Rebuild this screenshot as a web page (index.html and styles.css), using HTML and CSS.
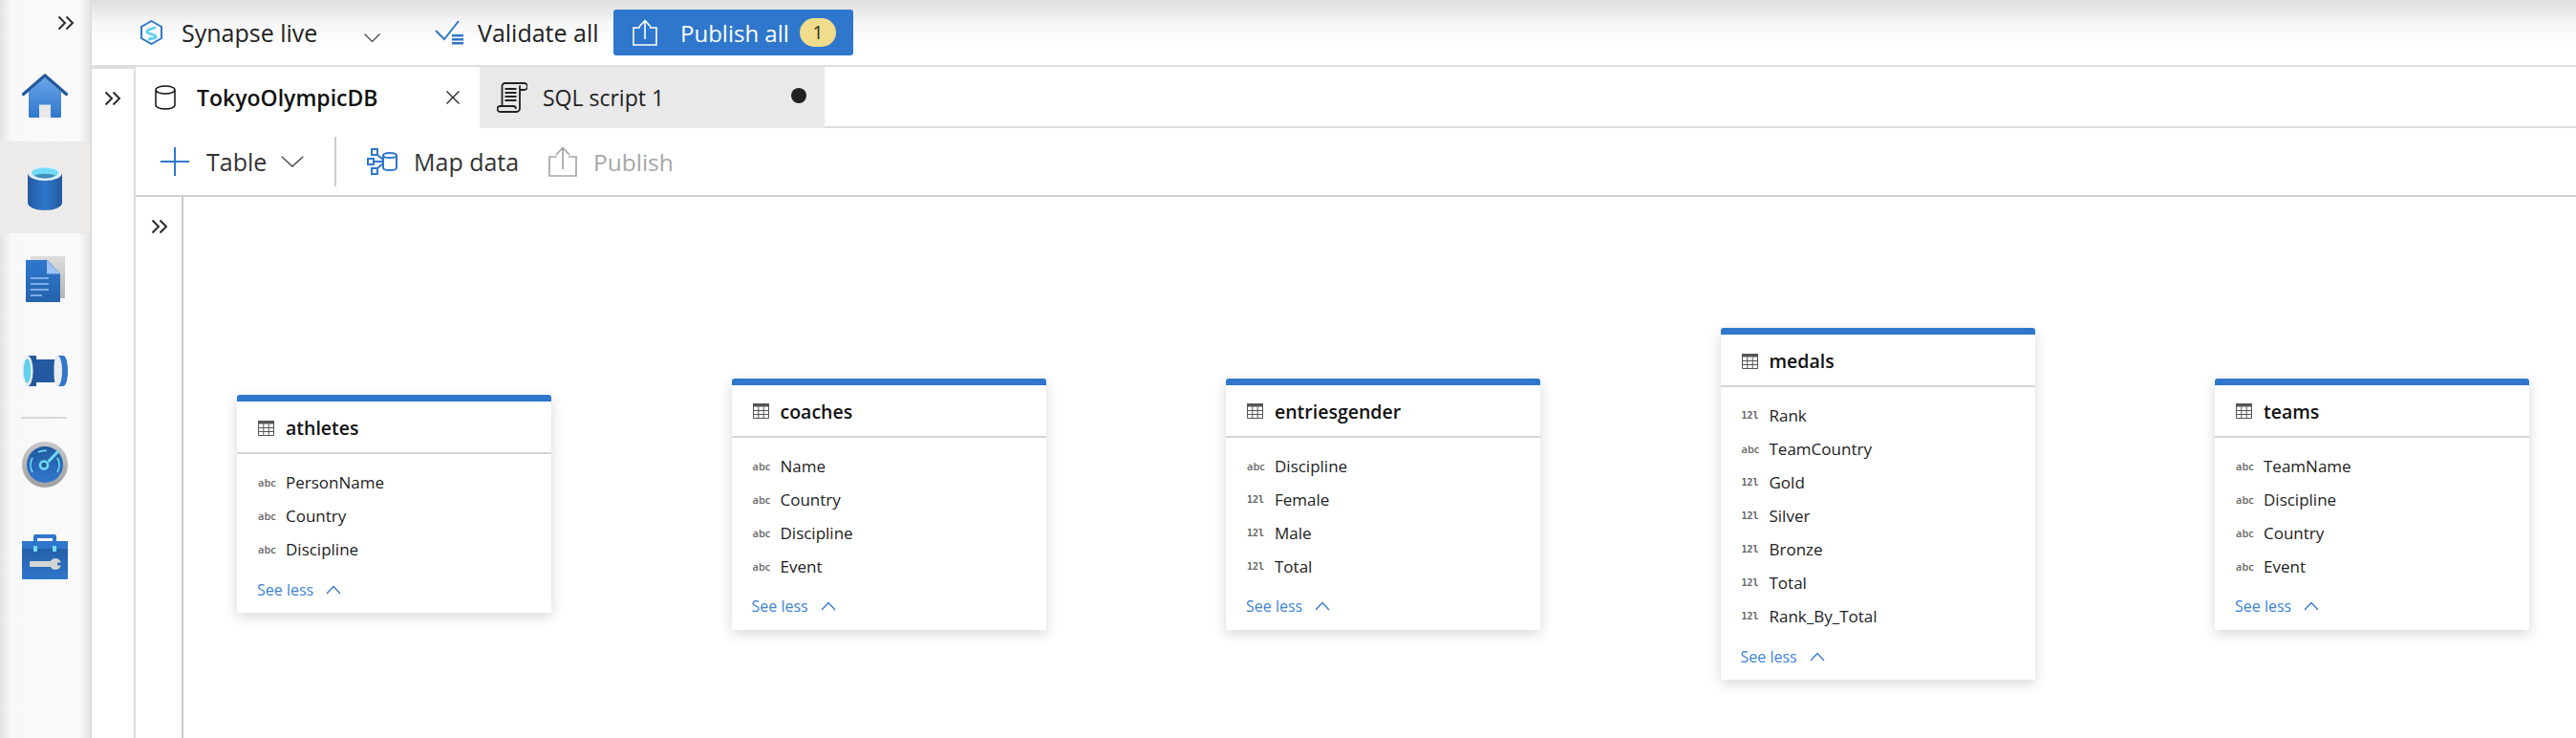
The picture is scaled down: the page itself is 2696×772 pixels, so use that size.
FILE: index.html
```html
<!DOCTYPE html>
<html lang="en">
<head>
    <meta charset="UTF-8">
    <title>Synapse Studio</title>
    <link rel="stylesheet" href="styles.css">
</head>

<body>

<!-- Shared icons -->
<svg class="defs" aria-hidden="true">
    <defs>
        <linearGradient id="g-down" x1="0" y1="0" x2="0" y2="1">
            <stop offset="0" stop-color="#6aa5ea"/>
            <stop offset="1" stop-color="#2f77cc"/>
        </linearGradient>
        <linearGradient id="g-cyl" x1="0" y1="0" x2="1" y2="0">
            <stop offset="0" stop-color="#22599f"/>
            <stop offset=".5" stop-color="#2f77cc"/>
            <stop offset="1" stop-color="#22599f"/>
        </linearGradient>
        <linearGradient id="g-doc" x1="0" y1="0" x2="0" y2="1">
            <stop offset="0" stop-color="#2f77cc"/>
            <stop offset="1" stop-color="#2562ad"/>
        </linearGradient>
        <linearGradient id="g-back" x1="0" y1="0" x2="0" y2="1">
            <stop offset="0" stop-color="#dcdcdc"/>
            <stop offset="1" stop-color="#b4b4b4"/>
        </linearGradient>
        <linearGradient id="g-ring" x1="0" y1="0" x2="0" y2="1">
            <stop offset="0" stop-color="#c8c8c8"/>
            <stop offset="1" stop-color="#a0a0a0"/>
        </linearGradient>
        <linearGradient id="g-box" x1="0" y1="0" x2="0" y2="1">
            <stop offset="0" stop-color="#22599f"/>
            <stop offset="1" stop-color="#2f77cc"/>
        </linearGradient>
        <symbol id="i-table" viewBox="0 0 17 16">
            <path d="M.5.5h16v15H.5z" fill="none" stroke="#555" stroke-width="1"/>
            <path d="M0 0h17v3.500H0z" fill="#555"/>
            <path d="M.5 7.500h16M.5 11.500h16M5.800 3.500v12M11.200 3.500v12" fill="none" stroke="#555" stroke-width="1"/>
        </symbol>
        <symbol id="i-up" viewBox="0 0 16 10">
            <path d="M1 9l7-7.500L15 9" fill="none" stroke="#2f77cc" stroke-width="1.200"/>
        </symbol>
        <symbol id="i-double" viewBox="0 0 18 16">
            <path d="M1.500 1.500L8 8l-6.500 6.500M9.500 1.500L16 8l-6.500 6.500" fill="none" stroke="#2b2b2b" stroke-width="2"/>
        </symbol>
    </defs>
</svg>

<!-- Left rail -->
<aside class="rail">
    <svg class="rail-toggle"><use href="#i-double"></use></svg>

    <div class="rail-item">
        <svg width="48" height="46" viewBox="0 0 48 46">
            <path d="M7 19L24 4l17 15v25.500a1.500 1.500 0 0 1-1.500 1.500H8.500A1.500 1.500 0 0 1 7 44.500z" fill="url(#g-down)"/>
            <path d="M1.500 21.500L24 2l22.500 19.500" fill="none" stroke="#22599f" stroke-width="3.400" stroke-linecap="round" stroke-linejoin="round"/>
            <rect x="18" y="32.500" width="12" height="13.500" fill="#e8e8e8"/>
        </svg>
    </div>

    <div class="rail-item active">
        <svg width="36" height="47" viewBox="0 0 36 47">
            <path d="M0 8v31c0 4.500 8 8 18 8s18-3.500 18-8V8z" fill="url(#g-cyl)"/>
            <ellipse cx="18" cy="8" rx="18" ry="8" fill="#e6edf4"/>
            <ellipse cx="18" cy="8" rx="14" ry="5.500" fill="#72dcf6"/>
            <path d="M7 10.500c2 1.800 6 3 11 3s9-1.200 11-3c-2.500-1-6.500-1.700-11-1.700s-8.500.7-11 1.700z" fill="#3f8fb8"/>
        </svg>
    </div>

    <div class="rail-item">
        <svg width="41" height="48" viewBox="0 0 41 48">
            <rect x="5" y="0" width="36" height="44" rx="1" fill="url(#g-back)"/>
            <path d="M1 4h21.500L36 18.500V47a1 1 0 0 1-1 1H1a1 1 0 0 1-1-1V5a1 1 0 0 1 1-1z" fill="url(#g-doc)"/>
            <path d="M22 4l14 14.500H22z" fill="#9cc3f3"/>
            <path d="M5 23h19M5 29h19M5 35h19M5 41h12" stroke="#9cc3f3" stroke-width="1.600"/>
        </svg>
    </div>

    <div class="rail-item">
        <svg width="48" height="32" viewBox="0 0 48 32">
            <rect x="9" y="4" width="28" height="24" fill="#22599f"/>
            <path d="M6 0h9v32H6z" fill="#22599f"/>
            <path d="M37 0h6c3 0 5 7 5 16s-2 16-5 16h-6z" fill="#2f77cc"/>
            <path d="M37 0c3 0 5 7 5 16s-2 16-5 16-3.500-7-3.500-16 .5-16 3.500-16z" fill="#e8edf2"/>
            <ellipse cx="5.800" cy="16" rx="5.800" ry="16" fill="#e8edf2"/>
            <ellipse cx="5.500" cy="16" rx="3.800" ry="12.500" fill="#62cfee"/>
        </svg>
    </div>

    <div class="rail-divider"></div>

    <div class="rail-item">
        <svg width="48" height="48" viewBox="0 0 48 48">
            <circle cx="24" cy="24" r="24" fill="url(#g-ring)"/>
            <circle cx="24" cy="24" r="19" fill="url(#g-box)"/>
            <path d="M11 32a15 15 0 0 1 0-15M17 11a15 15 0 0 1 9-1.500M37 17a15 15 0 0 1 0 15" fill="none" stroke="#6fdcf5" stroke-width="1.600"/>
            <path d="M38 10L27.500 21" stroke="#6fdcf5" stroke-width="3"/>
            <circle cx="23" cy="24.500" r="4" fill="#22599f" stroke="#6fdcf5" stroke-width="2.600"/>
        </svg>
    </div>

    <div class="rail-item">
        <svg width="48" height="48" viewBox="0 0 48 48">
            <path d="M12 10V3a2 2 0 0 1 2-2h20a2 2 0 0 1 2 2v7h-4V5H16v5z" fill="#2f77cc"/>
            <rect x="0" y="8" width="48" height="40" rx="1" fill="url(#g-box)"/>
            <rect x="0" y="8" width="48" height="8" fill="#2f77cc"/>
            <path d="M12 13h4v6h-4zM32 13h4v6h-4z" fill="#6fdcf5"/>
            <rect x="8" y="29" width="24" height="6" rx="1" fill="#d4d4d4"/>
            <circle cx="35" cy="32" r="6" fill="#d4d4d4"/>
            <rect x="37" y="30.500" width="5" height="3" fill="#2a69b6"/>
        </svg>
    </div>
</aside>

<div class="main">

    <!-- Top command bar -->
    <header class="topbar">
        <svg class="hub-icon" width="23" height="26" viewBox="0 0 23 26">
            <path d="M11.500 1L22 7v12l-10.500 6L1 19V7z" fill="none" stroke="#2f77cc" stroke-width="2"/>
            <path d="M16 7.500L8 10.500c-1.500.8-1.500 2.200 0 3l7 2.500c1.500.8 1.500 2 0 2.800L8 20" fill="none" stroke="#5fd0f0" stroke-width="2.800"/>
        </svg>
        <span class="hub-name">Synapse live</span>
        <svg class="hub-caret" width="17" height="9" viewBox="0 0 17 9">
            <path d="M.5.5l8 8 8-8" fill="none" stroke="#444" stroke-width="1.200"/>
        </svg>
        <svg class="validate-icon" width="30" height="26" viewBox="0 0 30 26">
            <path d="M1 11l9 9L25 1" fill="none" stroke="#2f77cc" stroke-width="2"/>
            <path d="M18 15h12v2.500H18zM18 19h12v2.500H18zM18 23h12v2.500H18z" fill="#2f77cc"/>
        </svg>
        <span class="validate-label">Validate all</span>
        <button class="publish-btn">
            <svg width="26" height="28" viewBox="0 0 26 28">
                <path d="M8 9H1v18h24V9h-7M13 21V2M7 8l6-6.500L19 8" fill="none" stroke="#fff" stroke-width="1.600"/>
            </svg>
            <span class="publish-label">Publish all</span>
            <span class="badge">1</span>
        </button>
    </header>

    <div class="workspace">

        <!-- Collapsed explorer -->
        <div class="explorer">
            <svg class="pane-toggle"><use href="#i-double"></use></svg>
        </div>

        <div class="content">

            <!-- Tabs -->
            <div class="tabs">
                <div class="tab tab-active">
                    <svg width="22" height="26" viewBox="0 0 22 26">
                        <path d="M1 5v16c0 2.200 4.500 4 10 4s10-1.800 10-4V5M1 5c0-2.200 4.500-4 10-4s10 1.800 10 4-4.500 4-10 4S1 7.200 1 5z" fill="none" stroke="#111" stroke-width="1.500"/>
                    </svg>
                    <span class="tab-title">TokyoOlympicDB</span>
                    <svg class="tab-close" width="16" height="14" viewBox="0 0 16 14">
                        <path d="M1.500.5l13 13M14.500.5l-13 13" fill="none" stroke="#222" stroke-width="1.300"/>
                    </svg>
                </div>
                <div class="tab tab-script">
                    <svg width="32" height="32" viewBox="0 0 32 32">
                        <path d="M5.500 25V4a3 3 0 0 1 3-3h20a3.500 3.500 0 0 1 0 7H24M24 3.500V27.500A3.500 3.500 0 0 1 20.500 31H3.500a3 3 0 0 1 0-6H17a3 3 0 0 1 3 3M8.500 1h15" fill="none" stroke="#222" stroke-width="1.800"/>
                        <path d="M8.500 7h12M8.500 11h12M8.500 15h12M8.500 19h12" stroke="#222" stroke-width="1.800"/>
                    </svg>
                    <span class="tab-script-title">SQL script 1</span>
                    <span class="dirty-dot"></span>
                </div>
                <div class="tabs-rest"></div>
            </div>

            <!-- Toolbar -->
            <div class="toolbar">
                <svg class="plus-icon" width="30" height="30" viewBox="0 0 30 30">
                    <path d="M15 0v30M0 15h30" stroke="#2f77cc" stroke-width="2"/>
                </svg>
                <span class="table-label">Table</span>
                <svg class="table-caret" width="24" height="12" viewBox="0 0 24 12">
                    <path d="M.7.7L12 11 23.300.7" fill="none" stroke="#444" stroke-width="1.300"/>
                </svg>
                <div class="toolbar-sep"></div>
                <svg class="map-icon" width="32" height="28" viewBox="0 0 32 28">
                    <path d="M5 1h6v6H5zM1 11h6v6H1zM5 21h6v6H5zM11 7l6 5M7 14h10M11 21l6-5" fill="none" stroke="#2f77cc" stroke-width="2"/>
                    <path d="M17 7.500v13c0 1.500 3 2.500 7 2.500s7-1 7-2.500v-13M17 7.500C17 6 20 5 24 5s7 1 7 2.500-3 2.500-7 2.500-7-1-7-2.500z" fill="none" stroke="#2f77cc" stroke-width="2"/>
                </svg>
                <span class="map-label">Map data</span>
                <svg class="publish-icon" width="30" height="32" viewBox="0 0 30 32">
                    <path d="M9 11H1v20h28V11h-8M15 24V2M8 9l7-7.500L22 9" fill="none" stroke="#a6a6a6" stroke-width="1.700"/>
                </svg>
                <span class="publish-muted">Publish</span>
            </div>

            <div class="designer">
                <div class="designer-side">
                    <svg class="pane-toggle"><use href="#i-double"></use></svg>
                </div>

                <!-- Table cards -->
                <div class="canvas">
                    <section class="card">
                        <h3 class="card-head"><svg class="table-icon"><use href="#i-table"></use></svg>athletes</h3>
                        <ul class="fields">
                            <li><span class="type">abc</span>PersonName</li>
                            <li><span class="type">abc</span>Country</li>
                            <li><span class="type">abc</span>Discipline</li>
                        </ul>
                        <div class="see-less">See less <svg class="up-icon"><use href="#i-up"></use></svg></div>
                    </section>

                    <section class="card">
                        <h3 class="card-head"><svg class="table-icon"><use href="#i-table"></use></svg>coaches</h3>
                        <ul class="fields">
                            <li><span class="type">abc</span>Name</li>
                            <li><span class="type">abc</span>Country</li>
                            <li><span class="type">abc</span>Discipline</li>
                            <li><span class="type">abc</span>Event</li>
                        </ul>
                        <div class="see-less">See less <svg class="up-icon"><use href="#i-up"></use></svg></div>
                    </section>

                    <section class="card">
                        <h3 class="card-head"><svg class="table-icon"><use href="#i-table"></use></svg>entriesgender</h3>
                        <ul class="fields">
                            <li><span class="type">abc</span>Discipline</li>
                            <li><span class="type num">12l</span>Female</li>
                            <li><span class="type num">12l</span>Male</li>
                            <li><span class="type num">12l</span>Total</li>
                        </ul>
                        <div class="see-less">See less <svg class="up-icon"><use href="#i-up"></use></svg></div>
                    </section>

                    <section class="card">
                        <h3 class="card-head"><svg class="table-icon"><use href="#i-table"></use></svg>medals</h3>
                        <ul class="fields">
                            <li><span class="type num">12l</span>Rank</li>
                            <li><span class="type">abc</span>TeamCountry</li>
                            <li><span class="type num">12l</span>Gold</li>
                            <li><span class="type num">12l</span>Silver</li>
                            <li><span class="type num">12l</span>Bronze</li>
                            <li><span class="type num">12l</span>Total</li>
                            <li><span class="type num">12l</span>Rank_By_Total</li>
                        </ul>
                        <div class="see-less">See less <svg class="up-icon"><use href="#i-up"></use></svg></div>
                    </section>

                    <section class="card">
                        <h3 class="card-head"><svg class="table-icon"><use href="#i-table"></use></svg>teams</h3>
                        <ul class="fields">
                            <li><span class="type">abc</span>TeamName</li>
                            <li><span class="type">abc</span>Discipline</li>
                            <li><span class="type">abc</span>Country</li>
                            <li><span class="type">abc</span>Event</li>
                        </ul>
                        <div class="see-less">See less <svg class="up-icon"><use href="#i-up"></use></svg></div>
                    </section>
                </div>
            </div>
        </div>
    </div>
</div>

</body>
</html>
```

FILE: styles.css
```css
html, body {
    height: 100%;
    margin: 0;
    padding: 0;
}

body {
    display: flex;
    height: 772px;
    overflow: hidden;
    background: #fff;
    color: #222;
    font-family: "Open Sans", "Noto Sans", sans-serif;
}

.defs {
    width: 0;
    height: 0;
    position: absolute;
}

/* Left rail */
.rail {
    width: 94px;
    flex-shrink: 0;
    border-right: 2px solid #ddd;
    display: flex;
    flex-direction: column;
    align-items: stretch;
    background: linear-gradient(90deg, #e4e4e4 0, #f8f8f8 12px, #fafafa 82px, #e6e6e6 94px);
}

.rail-toggle {
    width: 18px;
    height: 16px;
    margin: 16px 0 20px 60px;
    flex-shrink: 0;
}

.rail-item {
    height: 96px;
    display: flex;
    align-items: center;
    justify-content: center;
}

.rail-item.active {
    background: #edebe9;
}

.rail-divider {
    height: 2px;
    margin: 0 24px 0 22px;
    background: #d9d9d9;
}

/* Top command bar */
.main {
    flex: 1;
    min-width: 0;
    display: flex;
    flex-direction: column;
}

.topbar {
    height: 68px;
    border-bottom: 2px solid #ddd;
    display: flex;
    align-items: center;
    background: linear-gradient(180deg, #dedede 0, #f6f6f6 24px, #fff 48px);
    font-size: 25px;
}

.hub-icon {
    margin-left: 51px;
}

.hub-name {
    margin-left: 20px;
    width: 141px;
    white-space: nowrap;
}

.hub-caret {
    margin-left: 50px;
    margin-top: 10px;
}

.validate-icon {
    margin-left: 57px;
}

.validate-label {
    margin-left: 15px;
    width: 125px;
    white-space: nowrap;
}

.publish-btn {
    margin-left: 17px;
    width: 251px;
    height: 48px;
    padding: 0 0 0 20px;
    border: none;
    border-radius: 3px;
    background: #2f77cc;
    color: #fff;
    display: flex;
    align-items: center;
    font-family: inherit;
    font-size: 24px;
}

.publish-label {
    margin-left: 24px;
    width: 125px;
    text-align: left;
    white-space: nowrap;
}

.badge {
    width: 38px;
    height: 30px;
    border-radius: 15px;
    background: #f0dc8c;
    color: #333;
    font-size: 20px;
    line-height: 30px;
    text-align: center;
}

/* Workspace */
.workspace {
    flex: 1;
    display: flex;
    min-height: 0;
}

.explorer {
    width: 44px;
    flex-shrink: 0;
    border-top: 2px solid #ddd;
    border-right: 2px solid #ddd;
}

.pane-toggle {
    width: 18px;
    height: 16px;
    display: block;
}

.explorer .pane-toggle {
    margin: 23px 0 0 13px;
}

.content {
    flex: 1;
    min-width: 0;
    display: flex;
    flex-direction: column;
}

/* Tabs */
.tabs {
    height: 64px;
    display: flex;
}

.tab {
    display: flex;
    align-items: center;
    box-sizing: border-box;
}

.tab-active {
    width: 360px;
    padding-left: 20px;
}

.tab-title {
    margin-left: 22px;
    width: 260px;
    font-size: 23px;
    font-weight: 600;
    color: #111;
    white-space: nowrap;
}

.tab-script {
    width: 361px;
    padding-left: 18px;
    background: #e9e9e9;
}

.tab-script-title {
    margin-left: 16px;
    width: 260px;
    font-size: 23px;
    white-space: nowrap;
}

.dirty-dot {
    width: 16px;
    height: 16px;
    border-radius: 50%;
    background: #222;
    margin-bottom: 4px;
}

.tabs-rest {
    flex: 1;
    border-bottom: 2px solid #ddd;
}

/* Toolbar */
.toolbar {
    height: 70px;
    border-bottom: 2px solid #cfcfcf;
    display: flex;
    align-items: center;
    font-size: 25px;
    color: #333;
}

.plus-icon {
    margin-left: 26px;
}

.table-label {
    margin-left: 18px;
    width: 62px;
}

.table-caret {
    margin-left: 16px;
}

.toolbar-sep {
    width: 2px;
    height: 52px;
    margin-left: 32px;
    background: #ccc;
}

.map-icon {
    margin-left: 32px;
}

.map-label {
    margin-left: 17px;
    width: 108px;
    white-space: nowrap;
}

.publish-icon {
    margin-left: 33px;
}

.publish-muted {
    margin-left: 17px;
    font-size: 24.500px;
    color: #a6a6a6;
}

/* Designer */
.designer {
    flex: 1;
    min-height: 0;
    display: flex;
}

.designer-side {
    width: 48px;
    flex-shrink: 0;
    border-right: 2px solid #c8c8c8;
}

.designer-side .pane-toggle {
    margin: 23px 0 0 16px;
}

.canvas {
    flex: 1;
    min-width: 0;
    padding: 76px 0 0 56px;
    display: flex;
    align-items: center;
    gap: 188.500px;
}

.card {
    width: 329px;
    flex-shrink: 0;
    border-top: 7px solid #2f77cc;
    border-radius: 3px 3px 0 0;
    background: #fff;
    box-shadow: 0 4px 14px rgba(0, 0, 0, 0.16);
}

.card-head {
    box-sizing: border-box;
    height: 55px;
    margin: 0;
    border-bottom: 2px solid #d4d4d4;
    padding: 2px 0 0 22px;
    display: flex;
    align-items: center;
    font-size: 19.500px;
    font-weight: 600;
    color: #111;
}

.table-icon {
    width: 17px;
    height: 16px;
    margin-right: 12px;
}

.fields {
    list-style: none;
    margin: 0;
    padding: 12px 0 0 22px;
}

.fields li {
    height: 35px;
    display: flex;
    align-items: center;
    font-size: 17px;
    color: #222;
}

.type {
    width: 29px;
    font-size: 11px;
    font-weight: 600;
    color: #666;
}

.type.num {
    font-family: "DejaVu Sans Mono", monospace;
    font-size: 10px;
    font-weight: 700;
}

.see-less {
    height: 49px;
    padding-left: 21px;
    display: flex;
    align-items: center;
    font-size: 16px;
    color: #3c83d6;
}

.up-icon {
    width: 16px;
    height: 10px;
    margin-left: 13px;
}
```
